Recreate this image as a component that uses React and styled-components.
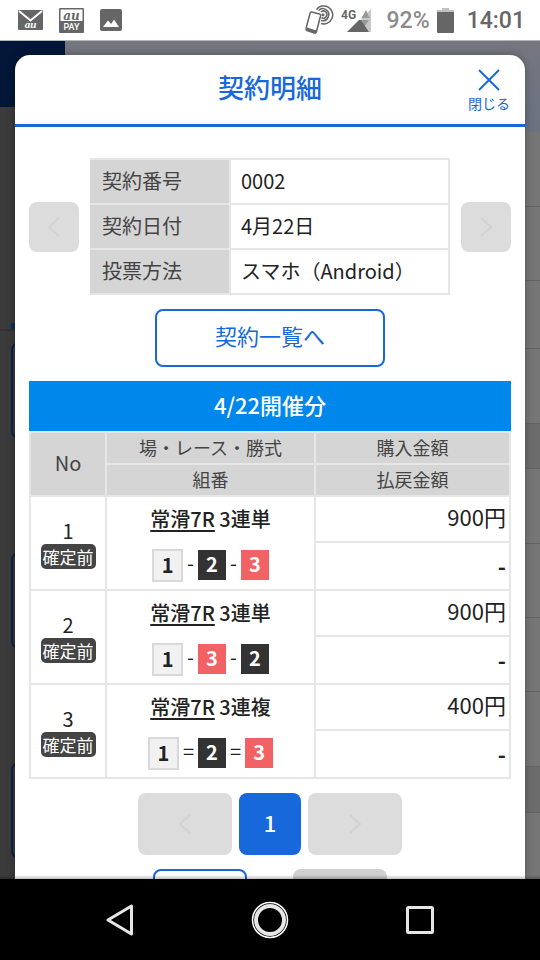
import styled, { createGlobalStyle } from "styled-components";

const GlobalStyle = createGlobalStyle`
  :root {
    --Blue: #1768db;
    --SkyBlue: #0087eb;
    --Text: #222222;
    --HeadText: #444444;
    --HeadBg: #d5d5d5;
    --Line: #e6e6e6;
    --Disabled: #dcdcdc;
    --StatusGray: #666666;
  }
  * {
    box-sizing: border-box;
  }
  body {
    margin: 0;
    color: var(--Text);
    background-color: #000000;
    font-family: "Noto Sans CJK JP", "Noto Sans", sans-serif;
  }
  button {
    font-family: inherit;
    padding: 0;
  }
`;

const Phone = styled.div`
  display: flex;
  flex-direction: column;
  height: 100vh;
`;

/* status bar */
const StatusBar = styled.header`
  display: flex;
  align-items: center;
  justify-content: space-between;
  height: 40px;
  flex: none;
  padding: 0 15px 0 17px;
  background-color: #ffffff;
  font-family: Roboto, sans-serif;
  color: var(--StatusGray);
`;
const StatusGroup = styled.div`
  display: flex;
  align-items: center;
  gap: ${(props) => props.$gap}px;
`;
const Percent = styled.span`
  margin-left: 8px;
  font-size: 23px;
  font-weight: 500;
  color: #8c8c8c;
`;
const Clock = styled.span`
  margin-left: 6px;
  font-size: 23px;
  font-weight: 500;
`;

/* dimmed page behind the dialog */
const Stage = styled.main`
  position: relative;
  flex: 1;
  min-height: 0;
  overflow: hidden;
  border-top: 1px solid #b4b6ba;
`;
const Backdrop = styled.div`
  display: grid;
  grid-template-columns: 65px 1fr;
  height: 100%;
`;
const SideMenu = styled.div`
  background-color: #3b3b3b;
`;
const SideLogo = styled.div`
  height: 66px;
  background-color: #021738;
`;
const SideTab = styled.div`
  height: 224px;
  padding-top: 216px;
  border-bottom: 2px solid #323232;
`;
const SideTabMark = styled.div`
  height: 6px;
  margin-left: 11px;
  background-color: #0a2f66;
`;
const SideCard = styled.div`
  height: 97px;
  margin: 11px 0 113px 11px;
  border: 2px solid #0a2450;
  border-radius: 8px;
`;
const MainHead = styled.div`
  height: 91px;
  background: linear-gradient(#747780, #6b7280);
`;
const MainRow = styled.div`
  height: ${(props) => props.$height}px;
  border-bottom: 1px solid #646464;
  background-color: ${(props) => (props.$dark ? "#6c6c6c" : "#767676")};
`;

/* dialog */
const Dialog = styled.section`
  position: absolute;
  top: 14px;
  left: 15px;
  right: 15px;
  bottom: 0;
  overflow: hidden;
  border-radius: 15px 15px 0 0;
  background-color: #ffffff;
  box-shadow: 0 0 8px rgba(0, 0, 0, 0.3);
`;
const DialogHead = styled.div`
  display: grid;
  grid-template-columns: 72px 1fr 72px;
  align-items: center;
  height: 72px;
  border-bottom: 3px solid var(--Blue);
`;
const Title = styled.h1`
  grid-column: 2;
  margin: 0;
  padding-bottom: 6px;
  font-size: 26px;
  line-height: 36px;
  font-weight: 500;
  text-align: center;
  color: var(--Blue);
`;
const CloseButton = styled.button`
  display: flex;
  flex-direction: column;
  align-items: center;
  padding-top: 4px;
  border: 0;
  background: none;
  font-size: 14px;
  line-height: 24px;
  color: var(--Blue);
`;
const DialogBody = styled.div`
  display: flex;
  flex-direction: column;
  align-items: center;
  gap: 14px;
  padding: 31px 14px 0;
`;

const InfoRow = styled.div`
  display: grid;
  grid-template-columns: 50px 1fr 50px;
  align-items: center;
  gap: 11px;
  width: 100%;
`;
const InfoTable = styled.table`
  width: 100%;
  border-collapse: collapse;
  font-size: 20px;
  line-height: 28px;
  text-align: left;
`;
const InfoHead = styled.th`
  width: 139px;
  height: 45px;
  padding: 0 10px 2px;
  border: 2px solid var(--Line);
  border-left-color: var(--HeadBg);
  font-weight: 400;
  color: var(--HeadText);
  background-color: var(--HeadBg);
`;
const InfoCell = styled.td`
  padding: 0 10px 2px;
  border: 2px solid var(--Line);
`;

const ArrowButton = styled.button`
  display: flex;
  align-items: center;
  justify-content: center;
  width: ${(props) => (props.$wide ? 94 : 50)}px;
  height: ${(props) => (props.$wide ? 62 : 50)}px;
  border: 0;
  border-radius: 8px;
  background-color: var(--Disabled);
  color: #d2d2d2;
`;
const OutlineButton = styled.button`
  width: ${(props) => (props.$small ? 94 : 230)}px;
  height: 58px;
  padding-bottom: 6px;
  border: 2px solid var(--Blue);
  border-radius: 8px;
  background-color: #ffffff;
  font-size: 22px;
  line-height: 30px;
  color: var(--Blue);
`;
const GrayButton = styled.button`
  width: 94px;
  height: 58px;
  border: 0;
  border-radius: 8px;
  background-color: #d0d0d0;
`;

const BetTable = styled.table`
  width: 100%;
  table-layout: fixed;
  border-collapse: collapse;
`;
const BetCaption = styled.caption`
  padding-bottom: 4px;
  font-size: 22px;
  line-height: 46px;
  font-weight: 500;
  color: #ffffff;
  background-color: var(--SkyBlue);
`;
const BetHead = styled.th`
  width: ${(props) => props.$width || "auto"};
  height: 32px;
  padding: 0 0 2px;
  border: 2px solid var(--Line);
  font-size: ${(props) => (props.$big ? 20 : 18)}px;
  line-height: 28px;
  font-weight: 400;
  color: var(--HeadText);
  background-color: var(--HeadBg);
`;
const BetCell = styled.td`
  padding: 0;
  border: 2px solid var(--Line);
`;
const AmountCell = styled.td`
  height: ${(props) => (props.$payout ? 48 : 46)}px;
  padding: ${(props) => (props.$payout ? "0 3px 2px" : "0 3px 6px")};
  border: 2px solid var(--Line);
  font-size: 22px;
  line-height: 30px;
  font-weight: ${(props) => (props.$payout ? 700 : 400)};
  text-align: right;
`;
const NumberBox = styled.div`
  display: flex;
  flex-direction: column;
  align-items: center;
  font-size: 20px;
  line-height: 26px;
`;
const Badge = styled.span`
  padding: 0 2px;
  border-radius: 5px;
  font-size: 17px;
  line-height: 25px;
  color: #ffffff;
  background-color: #444444;
`;
const BetBox = styled.div`
  display: flex;
  flex-direction: column;
  align-items: center;
  gap: 14px;
  font-size: 20px;
  line-height: 30px;
  font-weight: 500;
`;
const RaceLink = styled.a`
  color: inherit;
  text-decoration: underline;
  text-decoration-thickness: 2px;
  text-underline-offset: 3px;
`;
const Combination = styled.div`
  display: flex;
  align-items: center;
  font-weight: 400;
`;
const Separator = styled.span`
  margin: 0 4px;
  padding-bottom: 4px;
`;
const tileColors = {
  1: { bg: "#f1f1f1", text: "#222222" },
  2: { bg: "#333333", text: "#ffffff" },
  3: { bg: "#f26163", text: "#ffffff" },
};
const Tile = styled.span`
  width: ${(props) => (props.$boat === 1 ? 31 : 28)}px;
  height: ${(props) => (props.$boat === 1 ? 33 : 30)}px;
  border: ${(props) => (props.$boat === 1 ? "2px solid #d9d9d9" : "0")};
  line-height: 28px;
  font-weight: 700;
  text-align: center;
  color: ${(props) => tileColors[props.$boat].text};
  background-color: ${(props) => tileColors[props.$boat].bg};
`;

const Pager = styled.nav`
  display: flex;
  gap: 7px;
`;
const PageButton = styled.button`
  width: 62px;
  height: 62px;
  padding-bottom: 4px;
  border: 0;
  border-radius: 8px;
  font-size: 22px;
  font-weight: 500;
  color: #ffffff;
  background-color: var(--Blue);
`;
const Actions = styled.div`
  display: flex;
  gap: 46px;
`;
const BottomShade = styled.div`
  position: absolute;
  left: 0;
  right: 0;
  bottom: 0;
  height: 4px;
  background: linear-gradient(rgba(0, 0, 0, 0), rgba(0, 0, 0, 0.25));
`;

/* android navigation */
const NavBar = styled.footer`
  display: grid;
  grid-template-columns: repeat(3, 150px);
  justify-content: center;
  height: 81px;
  flex: none;
  background-color: #000000;
`;
const NavButton = styled.button`
  display: flex;
  align-items: center;
  justify-content: center;
  border: 0;
  background: none;
`;

const info = [
  { label: "契約番号", value: "0002" },
  { label: "契約日付", value: "4月22日" },
  { label: "投票方法", value: "スマホ（Android）" },
];

const bets = [
  { no: 1, type: "3連単", boats: [1, 2, 3], sign: "-", amount: "900円" },
  { no: 2, type: "3連単", boats: [1, 3, 2], sign: "-", amount: "900円" },
  { no: 3, type: "3連複", boats: [1, 2, 3], sign: "=", amount: "400円" },
];

const mainRows = [
  { height: 75 },
  { height: 74 },
  { height: 68 },
  { height: 75 },
  { height: 45, dark: true },
  { height: 75 },
  { height: 74 },
  { height: 74 },
  { height: 75 },
  { height: 46, dark: true },
  { height: 80 },
];

const Chevron = ({ right }) => (
  <svg width="12" height="20" viewBox="0 0 12 20" fill="none">
    <path
      d={right ? "M1 1L11 10L1 19" : "M11 1L1 10L11 19"}
      stroke="currentColor"
      strokeWidth="2"
    />
  </svg>
);

const MailIcon = () => (
  <svg width="26" height="22" viewBox="0 0 26 22">
    <rect x="1" y="1" width="25" height="20" rx="1" fill="#666" />
    <path d="M2 2L13.500 11.500L25 2" fill="none" stroke="#fff" strokeWidth="2" />
    <text
      x="13.500"
      y="19"
      fontSize="11"
      fontStyle="italic"
      fontWeight="700"
      fontFamily="Liberation Serif, serif"
      textAnchor="middle"
      fill="#fff"
    >
      au
    </text>
  </svg>
);

const PayIcon = () => (
  <svg width="25" height="25" viewBox="0 0 25 25">
    <rect width="25" height="25" rx="1" fill="#666" />
    <rect x="1.500" y="1.500" width="22" height="11.500" fill="#fff" />
    <text
      x="12.500"
      y="11.500"
      fontSize="12"
      fontStyle="italic"
      fontWeight="700"
      fontFamily="DejaVu Serif, serif"
      textAnchor="middle"
      fill="#666"
    >
      au
    </text>
    <text
      x="12.500"
      y="22"
      fontSize="9"
      fontWeight="500"
      fontFamily="Roboto, sans-serif"
      textAnchor="middle"
      fill="#fff"
    >
      PAY
    </text>
  </svg>
);

const PhotoIcon = () => (
  <svg width="22" height="22" viewBox="0 0 22 22">
    <rect width="22" height="22" rx="2" fill="#666" />
    <path d="M3 18L8 11.500L11 15L14 10.500L19 18Z" fill="#fff" />
  </svg>
);

const TouchIcon = () => (
  <svg width="30" height="30" viewBox="0 0 30 30" fill="none" stroke="#666">
    <path d="M17.500 12.500A3.500 3.500 0 1 0 17 7" strokeWidth="1.500" />
    <path d="M17 15.500A6 6 0 1 0 14.500 5.500" strokeWidth="1.500" />
    <path d="M17 18.500A9 9 0 1 0 12.500 4.500" strokeWidth="1.500" />
    <circle cx="19" cy="9.800" r="1.500" fill="#666" stroke="none" />
    <path
      d="M8 7L15.500 9Q17 9.500 16.500 11L12.500 26.500Q12 28.500 10.500 28L3 25.500Q1.500 25 2 23.500L6 8.500Q6.500 6.500 8 7Z"
      fill="#fff"
      strokeWidth="1.500"
    />
    <path d="M2.500 24L12 27" strokeWidth="3" />
  </svg>
);

const SignalIcon = () => (
  <svg width="31" height="26" viewBox="0 0 31 26">
    <path d="M30 2V25H22L20 12Z" fill="#c8c8c8" />
    <path d="M25 3L28.500 11H20.500Z" fill="#999" />
    <path d="M20 13H28L24 19Z" fill="#999" />
    <path d="M6 25L18 13H20L24 19L28 25Z" fill="#666" />
    <text
      x="0"
      y="12"
      fontSize="12"
      fontWeight="700"
      fontFamily="Roboto, sans-serif"
      fill="#666"
    >
      4G
    </text>
  </svg>
);

const BatteryIcon = () => (
  <svg width="17" height="25" viewBox="0 0 17 25">
    <path d="M5 0H12V2H17V5H0V2H5Z" fill="#c0c0c0" />
    <path d="M0 4H17V24Q17 25 16 25H1Q0 25 0 24Z" fill="#666" />
  </svg>
);

const BetRows = ({ bet }) => (
  <tbody>
    <tr>
      <BetCell rowSpan={2}>
        <NumberBox>
          {bet.no}
          <Badge>確定前</Badge>
        </NumberBox>
      </BetCell>
      <BetCell rowSpan={2}>
        <BetBox>
          <div>
            <RaceLink href="#race">常滑7R</RaceLink> {bet.type}
          </div>
          <Combination>
            {bet.boats.map((boat, i) => [
              i > 0 && <Separator key={"sign" + boat}>{bet.sign}</Separator>,
              <Tile key={boat} $boat={boat}>
                {boat}
              </Tile>,
            ])}
          </Combination>
        </BetBox>
      </BetCell>
      <AmountCell>{bet.amount}</AmountCell>
    </tr>
    <tr>
      <AmountCell $payout>-</AmountCell>
    </tr>
  </tbody>
);

export default function App() {
  return (
    <Phone>
      <GlobalStyle />
      <StatusBar>
        <StatusGroup $gap={16}>
          <MailIcon />
          <PayIcon />
          <PhotoIcon />
        </StatusGroup>
        <StatusGroup $gap={7}>
          <TouchIcon />
          <SignalIcon />
          <Percent>92%</Percent>
          <BatteryIcon />
          <Clock>14:01</Clock>
        </StatusGroup>
      </StatusBar>

      <Stage>
        <Backdrop aria-hidden="true">
          <SideMenu>
            <SideLogo />
            <SideTab>
              <SideTabMark />
            </SideTab>
            <SideCard />
            <SideCard />
            <SideCard />
          </SideMenu>
          <div>
            <MainHead />
            {mainRows.map((row, i) => (
              <MainRow key={i} $height={row.height} $dark={row.dark} />
            ))}
          </div>
        </Backdrop>

        <Dialog role="dialog" aria-labelledby="dialog-title">
          <DialogHead>
            <Title id="dialog-title">契約明細</Title>
            <CloseButton>
              <svg width="22" height="22" viewBox="0 0 22 22">
                <path
                  d="M1 1L21 21M21 1L1 21"
                  stroke="currentColor"
                  strokeWidth="2"
                />
              </svg>
              閉じる
            </CloseButton>
          </DialogHead>
          <DialogBody>
            <InfoRow>
              <ArrowButton aria-label="前の契約" disabled>
                <Chevron />
              </ArrowButton>
              <InfoTable>
                <tbody>
                  {info.map((item) => (
                    <tr key={item.label}>
                      <InfoHead scope="row">{item.label}</InfoHead>
                      <InfoCell>{item.value}</InfoCell>
                    </tr>
                  ))}
                </tbody>
              </InfoTable>
              <ArrowButton aria-label="次の契約" disabled>
                <Chevron right />
              </ArrowButton>
            </InfoRow>

            <OutlineButton>契約一覧へ</OutlineButton>

            <BetTable>
              <BetCaption>4/22開催分</BetCaption>
              <thead>
                <tr>
                  <BetHead rowSpan={2} $width="76px" $big>
                    No
                  </BetHead>
                  <BetHead>場・レース・勝式</BetHead>
                  <BetHead $width="195px">購入金額</BetHead>
                </tr>
                <tr>
                  <BetHead>組番</BetHead>
                  <BetHead>払戻金額</BetHead>
                </tr>
              </thead>
              {bets.map((bet) => (
                <BetRows key={bet.no} bet={bet} />
              ))}
            </BetTable>

            <Pager aria-label="ページ">
              <ArrowButton $wide aria-label="前のページ" disabled>
                <Chevron />
              </ArrowButton>
              <PageButton>1</PageButton>
              <ArrowButton $wide aria-label="次のページ" disabled>
                <Chevron right />
              </ArrowButton>
            </Pager>

            <Actions>
              <OutlineButton $small aria-label="戻る" />
              <GrayButton aria-label="進む" disabled />
            </Actions>
          </DialogBody>
        </Dialog>
        <BottomShade />
      </Stage>

      <NavBar>
        <NavButton aria-label="戻る">
          <svg width="28" height="34" viewBox="0 0 28 34">
            <path
              d="M2 17L25.500 3V31Z"
              fill="none"
              stroke="#e6e6e6"
              strokeWidth="3"
              strokeLinejoin="round"
            />
          </svg>
        </NavButton>
        <NavButton aria-label="ホーム">
          <svg width="38" height="38" viewBox="0 0 38 38" fill="none">
            <circle cx="19" cy="19" r="17.500" stroke="#fff" strokeWidth="1.500" />
            <circle cx="19" cy="19" r="14" stroke="#e6e6e6" strokeWidth="4" />
          </svg>
        </NavButton>
        <NavButton aria-label="履歴">
          <svg width="28" height="28" viewBox="0 0 28 28">
            <rect
              x="1.500"
              y="1.500"
              width="25"
              height="25"
              rx="1"
              fill="none"
              stroke="#e6e6e6"
              strokeWidth="3"
            />
          </svg>
        </NavButton>
      </NavBar>
    </Phone>
  );
}
